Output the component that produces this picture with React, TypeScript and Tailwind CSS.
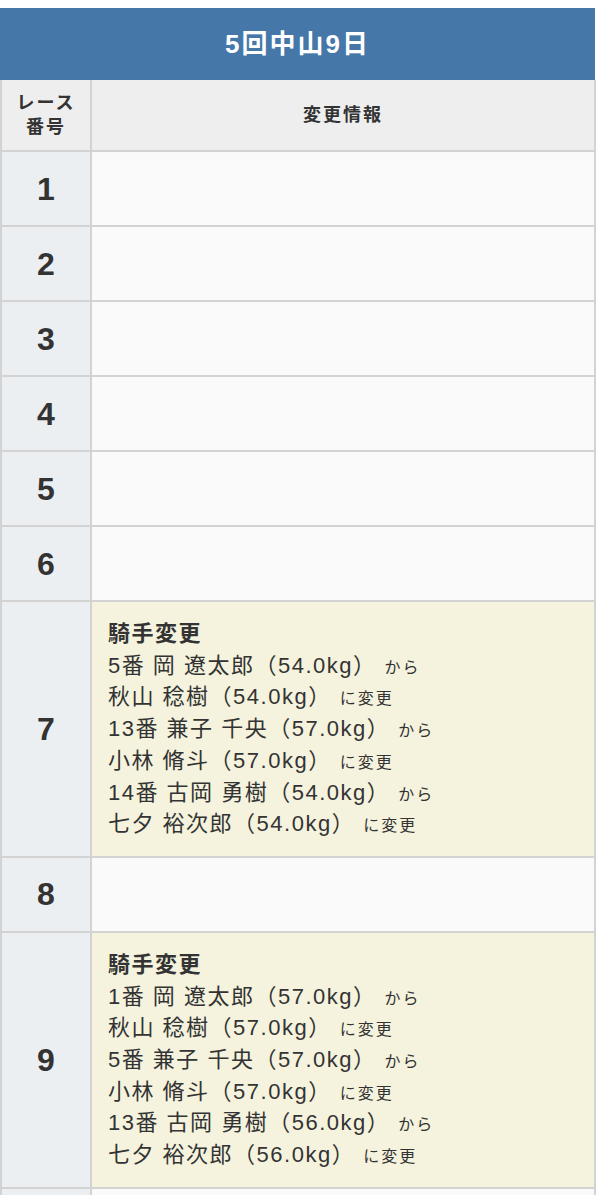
const rows: { no: number; changes?: { from: string; to: string }[] }[] = [
  { no: 1 },
  { no: 2 },
  { no: 3 },
  { no: 4 },
  { no: 5 },
  { no: 6 },
  {
    no: 7,
    changes: [
      { from: "5番 岡 遼太郎（54.0kg）", to: "秋山 稔樹（54.0kg）" },
      { from: "13番 兼子 千央（57.0kg）", to: "小林 脩斗（57.0kg）" },
      { from: "14番 古岡 勇樹（54.0kg）", to: "七夕 裕次郎（54.0kg）" },
    ],
  },
  { no: 8 },
  {
    no: 9,
    changes: [
      { from: "1番 岡 遼太郎（57.0kg）", to: "秋山 稔樹（57.0kg）" },
      { from: "5番 兼子 千央（57.0kg）", to: "小林 脩斗（57.0kg）" },
      { from: "13番 古岡 勇樹（56.0kg）", to: "七夕 裕次郎（56.0kg）" },
    ],
  },
  { no: 10 },
];

const font = { fontFamily: '"Liberation Sans", "Noto Sans CJK JP", sans-serif' };

export default function App() {
  return (
    <div className="bg-white pt-2 text-[#333]" style={font}>
      <div className="h-[72px] bg-[#4577a8] flex items-center justify-center text-white font-bold text-[26px] tracking-[2px] w-[595px]">
        5回中山9日
      </div>
      <table className="w-[596px] border-collapse table-fixed">
        <thead>
          <tr className="bg-[#eeeeee] h-[71px]">
            <th className="w-[90px] border-2 border-[#d3d3d3] border-t-0 text-[18px] tracking-[2px] leading-[24px] font-bold">
              レース
              <br />
              番号
            </th>
            <th className="border-2 border-[#d3d3d3] border-t-0 text-[18px] tracking-[2px] font-bold">変更情報</th>
          </tr>
        </thead>
        <tbody>
          {rows.map((r) => (
            <tr key={r.no} className="h-[75px]">
              <td className="bg-[#eceff1] border-2 border-[#d3d3d3] text-center text-[32px] font-bold">{r.no}</td>
              <td
                className={
                  r.changes
                    ? "bg-[#f5f3de] border-2 border-[#d3d3d3] px-4 py-4 text-[22px] tracking-[1.5px] leading-[31.7px]"
                    : "bg-[#fafafa] border-2 border-[#d3d3d3]"
                }
              >
                {r.changes && (
                  <>
                    <div className="font-bold">騎手変更</div>
                    {r.changes.map((c, i) => (
                      <div key={i}>
                        <div>
                          {c.from}
                          <span className="text-[16px] tracking-[2px] leading-none ml-2">から</span>
                        </div>
                        <div>
                          {c.to}
                          <span className="text-[16px] tracking-[2px] leading-none ml-2">に変更</span>
                        </div>
                      </div>
                    ))}
                  </>
                )}
              </td>
            </tr>
          ))}
        </tbody>
      </table>
    </div>
  );
}
